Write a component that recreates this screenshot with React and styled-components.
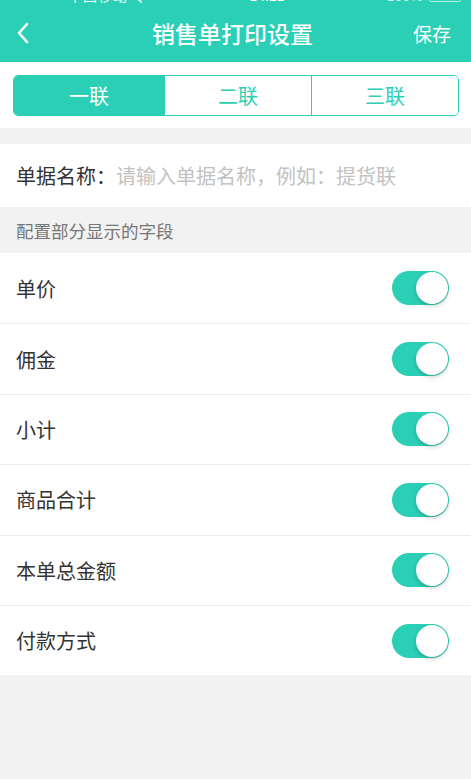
import React, { useState } from "react";
import styled, { createGlobalStyle } from "styled-components";

const TEAL = "#2bcfb5";

const GlobalStyle = createGlobalStyle`
  html, body {
    margin: 0;
    padding: 0;
    background: #f2f2f2;
    font-family: "Noto Sans CJK SC", "Noto Sans", sans-serif;
  }
`;

const Page = styled.div`
  width: 471px;
  min-height: 779px;
  background: #f2f2f2;
`;

const Header = styled.div`
  background: ${TEAL};
  height: 62px;
  position: relative;
  overflow: hidden;
`;

const StatusBar = styled.div`
  position: absolute;
  top: -14px;
  left: 0;
  right: 0;
  height: 18px;
  display: flex;
  align-items: center;
  justify-content: space-between;
  padding: 0 10px 0 68px;
  color: #fff;
  font-size: 14px;
  .carrier {
    letter-spacing: 1px;
  }
  .right {
    display: flex;
    align-items: center;
    gap: 6px;
    opacity: 0.8;
  }
  .battery {
    width: 30px;
    height: 12px;
    border: 1px solid rgba(255, 255, 255, 0.8);
    border-radius: 2px;
  }
`;

const NavBar = styled.div`
  height: 62px;
  display: flex;
  align-items: center;
  justify-content: space-between;
  padding: 4px 20px 0 16px;
  box-sizing: border-box;
  color: #fff;
`;

const Title = styled.div`
  font-size: 23px;
  font-weight: 500;
  margin-left: 22px;
`;

const Save = styled.div`
  font-size: 19px;
`;

const TabArea = styled.div`
  background: #fff;
  padding: 13px 12px 12px 13px;
`;

const Segmented = styled.div`
  display: flex;
  height: 41px;
  border: 1px solid ${TEAL};
  border-radius: 5px;
  overflow: hidden;
  box-sizing: border-box;
`;

const Segment = styled.div`
  flex: ${(p) => p.$flex};
  display: flex;
  align-items: center;
  justify-content: center;
  font-size: 20px;
  background: ${(p) => (p.$active ? TEAL : "#fff")};
  color: ${(p) => (p.$active ? "#fff" : TEAL)};
  & + & {
    border-left: 1px solid ${TEAL};
  }
`;

const NameRow = styled.div`
  margin-top: 16px;
  background: #fff;
  height: 63px;
  display: flex;
  align-items: center;
  padding-left: 16px;
  font-size: 20px;
  color: #333;
  span {
    color: #c2c2c2;
  }
`;

const SectionTitle = styled.div`
  height: 46px;
  display: flex;
  align-items: center;
  padding-left: 16px;
  font-size: 17.5px;
  color: #777;
`;

const List = styled.div`
  background: #fff;
`;

const Row = styled.div`
  height: 70.4px;
  box-sizing: border-box;
  display: flex;
  align-items: center;
  justify-content: space-between;
  padding: 0 22px 0 16px;
  font-size: 20px;
  color: #333;
  & + & {
    border-top: 1px solid #ebebeb;
  }
`;

const Toggle = styled.div`
  width: 57px;
  height: 34px;
  border-radius: 17px;
  background: ${(p) => (p.$on ? TEAL : "#e5e5e5")};
  position: relative;
  cursor: pointer;
  &::after {
    content: "";
    position: absolute;
    top: 1px;
    left: ${(p) => (p.$on ? "24px" : "1px")};
    width: 32px;
    height: 32px;
    border-radius: 50%;
    background: #fff;
    box-shadow: 0 2px 4px rgba(0, 0, 0, 0.2);
  }
`;

const fields = ["单价", "佣金", "小计", "商品合计", "本单总金额", "付款方式"];

export default function App() {
  const [tab, setTab] = useState(0);
  const [on, setOn] = useState(fields.map(() => true));

  return (
    <Page>
      <GlobalStyle />
      <Header>
        <StatusBar>
          <span className="carrier">中国移动 令</span>
          <span>14:21</span>
          <span className="right">
            100%
            <span className="battery" />
          </span>
        </StatusBar>
        <NavBar>
          <svg width="14" height="22" viewBox="0 0 14 22">
            <path
              d="M11 2 L3 11 L11 20"
              fill="none"
              stroke="#fff"
              strokeWidth="2.6"
              strokeLinecap="round"
              strokeLinejoin="round"
            />
          </svg>
          <Title>销售单打印设置</Title>
          <Save>保存</Save>
        </NavBar>
      </Header>
      <TabArea>
        <Segmented>
          {["一联", "二联", "三联"].map((t, i) => (
            <Segment
              key={t}
              $flex={i === 0 ? 151 : 147}
              $active={tab === i}
              onClick={() => setTab(i)}
            >
              {t}
            </Segment>
          ))}
        </Segmented>
      </TabArea>
      <NameRow>
        单据名称：<span>请输入单据名称，例如：提货联</span>
      </NameRow>
      <SectionTitle>配置部分显示的字段</SectionTitle>
      <List>
        {fields.map((f, i) => (
          <Row key={f}>
            {f}
            <Toggle
              $on={on[i]}
              onClick={() => setOn(on.map((v, j) => (j === i ? !v : v)))}
            />
          </Row>
        ))}
      </List>
    </Page>
  );
}
